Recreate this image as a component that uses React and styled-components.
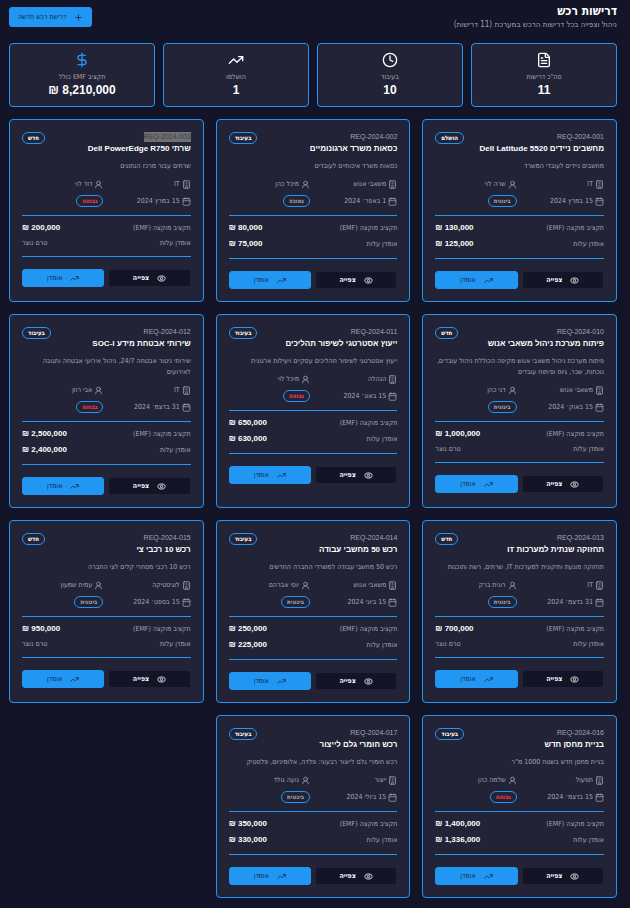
import React from "react";
import styled, { createGlobalStyle, css } from "styled-components";
import {
  Plus,
  FileText,
  Clock,
  TrendingUp,
  DollarSign,
  Eye,
  Building,
  UserRound,
  Calendar,
} from "lucide-react";

const color = {
  page: "#141428",
  card: "#232337",
  accent: "#2196f3",
  text: "#ffffff",
  muted: "#a3a3ae",
  danger: "#ff3d47",
  onAccent: "#10294a",
};

const font = {
  body: '"DejaVu Sans Condensed", "DejaVu Sans", sans-serif',
  strong: '"Liberation Sans", Arial, sans-serif',
};

const GlobalStyle = createGlobalStyle`
  * { box-sizing: border-box; }
  body {
    margin: 0;
    background: ${color.page};
    color: ${color.text};
    font-family: ${font.body};
    font-size: 7px;
    line-height: 10px;
  }
  h1, h2, p, dl, dt, dd, ul { margin: 0; padding: 0; }
  svg { flex: none; }
`;

const Page = styled.main`
  min-height: 100vh;
  padding: 4px 13px 10px 9px;
`;

const Header = styled.header`
  display: flex;
  justify-content: space-between;
  align-items: center;
  margin-bottom: 13px;
`;

const PageTitle = styled.h1`
  font-size: 12px;
  line-height: 15px;
`;

const Subtitle = styled.p`
  color: ${color.muted};
  font-size: 8px;
  line-height: 11px;
`;

const Button = styled.button`
  display: flex;
  align-items: center;
  justify-content: center;
  gap: 8px;
  height: ${(p) => (p.$large ? 20 : 18)}px;
  padding: 0 8px;
  border: 1px solid ${color.accent};
  border-radius: 3px;
  background: ${color.accent};
  color: ${color.onAccent};
  font: inherit;
  cursor: pointer;

  ${(p) =>
    p.$dark &&
    css`
      border-color: ${color.card};
      background: ${color.page};
      color: ${color.text};
      font-weight: 700;

      svg {
        color: ${color.muted};
      }
    `}
`;

const Stats = styled.section`
  display: grid;
  grid-template-columns: repeat(4, 1fr);
  gap: 8px;
  margin-bottom: 12px;
`;

const Panel = styled.article`
  border: 1px solid ${color.accent};
  border-radius: 4px;
  background: ${color.card};
`;

const StatCard = styled(Panel)`
  display: flex;
  flex-direction: column;
  align-items: center;
  padding: 8px;

  svg {
    color: ${(p) => (p.$accent ? color.accent : color.text)};
  }
`;

const StatLabel = styled.p`
  margin-top: 4px;
  color: ${color.muted};
`;

const StatValue = styled.p`
  font-family: ${font.strong};
  font-size: 12px;
  font-weight: 700;
  line-height: 16px;
`;

const Cards = styled.section`
  display: grid;
  grid-template-columns: repeat(3, 1fr);
  gap: 12px;
`;

const RequestCard = styled(Panel)`
  padding: 12px;
`;

const CardHeader = styled.div`
  display: flex;
  justify-content: space-between;
  align-items: flex-start;
`;

const RequestId = styled.p`
  width: fit-content;
  color: ${color.muted};
  font-family: ${font.strong};

  ${(p) =>
    p.$selected &&
    css`
      background: #707073;
      color: #3c3c44;
    `}
`;

const CardTitle = styled.h2`
  font-family: ${font.strong};
  font-size: 8px;
  line-height: 14px;
`;

const Badge = styled.span`
  display: inline-flex;
  align-items: center;
  height: 12px;
  padding: 0 5px;
  border: 1px solid ${color.accent};
  border-radius: 6px;
  color: ${(p) => color[p.$tone]};
  font-size: 6px;
  font-weight: 700;
  line-height: 10px;
  white-space: nowrap;
`;

const Description = styled.p`
  margin: 5px 0 7px;
  color: ${color.muted};
  line-height: 11px;
`;

const Facts = styled.ul`
  display: grid;
  grid-template-columns: 1fr 1fr;
  gap: 6px;
  list-style: none;
  color: ${color.muted};
`;

const Fact = styled.li`
  display: flex;
  align-items: center;
  gap: 2px;
`;

const Costs = styled.dl`
  display: grid;
  gap: 4px;
  margin: 8px 0 12px;
  padding: 6px 0 8px;
  border-top: 1px solid ${color.accent};
  border-bottom: 1px solid ${color.accent};
`;

const CostRow = styled.div`
  display: flex;
  justify-content: space-between;
  align-items: center;
  color: ${color.muted};
`;

const Amount = styled.dd`
  color: ${color.text};
  font-family: ${font.strong};
  font-size: 8px;
  font-weight: 700;
  line-height: 12px;
`;

const Pending = styled.dd`
  line-height: 10px;
`;

const Actions = styled.div`
  display: grid;
  grid-template-columns: 1fr 1fr;
  gap: 4px;
`;

const stats = [
  { icon: FileText, label: 'סה"כ דרישות', value: "11" },
  { icon: Clock, label: "בעיבוד", value: "10" },
  { icon: TrendingUp, label: "הושלמו", value: "1" },
  { icon: DollarSign, label: "תקציב EMF כולל", value: "8,210,000 ₪", accent: true },
];

const requests = [
  { id: "001", status: "הושלם", title: "מחשבים ניידים Dell Latitude 5520", text: "מחשבים ניידים לעובדי המשרד", dept: "IT", person: "שרה לוי", date: "15 במרץ 2024", priority: "בינונית", budget: "130,000", estimate: "125,000" },
  { id: "002", status: "בעיבוד", title: "כסאות משרד ארגונומיים", text: "כסאות משרד איכותיים לעובדים", dept: "משאבי אנוש", person: "מיכל כהן", date: "1 באפר׳ 2024", priority: "נמוכה", budget: "80,000", estimate: "75,000" },
  { id: "003", status: "חדש", title: "שרתי Dell PowerEdge R750", text: "שרתים עבור מרכז הנתונים", dept: "IT", person: "דוד לוי", date: "15 במרץ 2024", priority: "גבוהה", budget: "200,000", selected: true },
  { id: "010", status: "חדש", title: "פיתוח מערכת ניהול משאבי אנוש", text: "פיתוח מערכת ניהול משאבי אנוש מקיפה הכוללת ניהול עובדים, נוכחות, שכר, גיוס ופיתוח עובדים", dept: "משאבי אנוש", person: "דני כהן", date: "15 באוק׳ 2024", priority: "בינונית", budget: "1,000,000" },
  { id: "011", status: "בעיבוד", title: "ייעוץ אסטרטגי לשיפור תהליכים", text: "ייעוץ אסטרטגי לשיפור תהליכים עסקיים ויעילות ארגונית", dept: "הנהלה", person: "מיכל לוי", date: "15 באוג׳ 2024", priority: "גבוהה", budget: "650,000", estimate: "630,000" },
  { id: "012", status: "בעיבוד", title: "שירותי אבטחת מידע ו-SOC", text: "שירותי ניטור אבטחה 24/7, ניהול אירועי אבטחה ותגובה לאירועים", dept: "IT", person: "אבי רוזן", date: "31 בדצמ׳ 2024", priority: "גבוהה", budget: "2,500,000", estimate: "2,400,000" },
  { id: "013", status: "חדש", title: "תחזוקה שנתית למערכות IT", text: "תחזוקה מונעת ותיקונית למערכות IT, שרתים, רשת ותוכנות", dept: "IT", person: "רונית ברק", date: "31 בדצמ׳ 2024", priority: "בינונית", budget: "700,000" },
  { id: "014", status: "בעיבוד", title: "רכש 50 מחשבי עבודה", text: "רכש 50 מחשבי עבודה למשרדי החברה החדשים", dept: "משאבי אנוש", person: "יוסי אברהם", date: "15 ביוני 2024", priority: "בינונית", budget: "250,000", estimate: "225,000" },
  { id: "015", status: "חדש", title: "רכש 10 רכבי צי", text: "רכש 10 רכבי מסחרי קלים לצי החברה", dept: "לוגיסטיקה", person: "עמית שמעון", date: "15 בספט׳ 2024", priority: "בינונית", budget: "950,000" },
  { id: "016", status: "בעיבוד", title: "בניית מחסן חדש", text: 'בניית מחסן חדש בשטח 1000 מ"ר', dept: "תפעול", person: "שלמה כהן", date: "15 בדצמ׳ 2024", priority: "גבוהה", budget: "1,400,000", estimate: "1,336,000" },
  { id: "017", status: "בעיבוד", title: "רכש חומרי גלם לייצור", text: "רכש חומרי גלם לייצור רבעוני: פלדה, אלומיניום, פלסטיק", dept: "ייצור", person: "נועה גולד", date: "15 ביולי 2024", priority: "בינונית", budget: "350,000", estimate: "330,000" },
];

function Request({ item }) {
  return (
    <RequestCard>
      <CardHeader>
        <div>
          <RequestId $selected={item.selected}>REQ-2024-{item.id}</RequestId>
          <CardTitle>{item.title}</CardTitle>
        </div>
        <Badge $tone="text">{item.status}</Badge>
      </CardHeader>
      <Description>{item.text}</Description>
      <Facts>
        <Fact><Building size={9} />{item.dept}</Fact>
        <Fact><UserRound size={9} />{item.person}</Fact>
        <Fact><Calendar size={9} />{item.date}</Fact>
        <Fact>
          <Badge $tone={item.priority === "גבוהה" ? "danger" : "muted"}>{item.priority}</Badge>
        </Fact>
      </Facts>
      <Costs>
        <CostRow>
          <dt>תקציב מוקצה (EMF)</dt>
          <Amount>{item.budget} ₪</Amount>
        </CostRow>
        <CostRow>
          <dt>אומדן עלות</dt>
          {item.estimate ? <Amount>{item.estimate} ₪</Amount> : <Pending>טרם נוצר</Pending>}
        </CostRow>
      </Costs>
      <Actions>
        <Button type="button" $dark><Eye size={9} strokeWidth={3} />צפייה</Button>
        <Button type="button"><TrendingUp size={9} />אומדן</Button>
      </Actions>
    </RequestCard>
  );
}

export default function App() {
  return (
    <Page dir="rtl" lang="he">
      <GlobalStyle />
      <Header>
        <div>
          <PageTitle>דרישות רכש</PageTitle>
          <Subtitle>ניהול וצפייה בכל דרישות הרכש במערכת (11 דרישות)</Subtitle>
        </div>
        <Button type="button" $large><Plus size={9} />דרישת רכש חדשה</Button>
      </Header>
      <Stats>
        {stats.map(({ icon: Icon, label, value, accent }) => (
          <StatCard key={label} $accent={accent}>
            <Icon size={16} />
            <StatLabel>{label}</StatLabel>
            <StatValue>{value}</StatValue>
          </StatCard>
        ))}
      </Stats>
      <Cards>
        {requests.map((item) => <Request key={item.id} item={item} />)}
      </Cards>
    </Page>
  );
}
